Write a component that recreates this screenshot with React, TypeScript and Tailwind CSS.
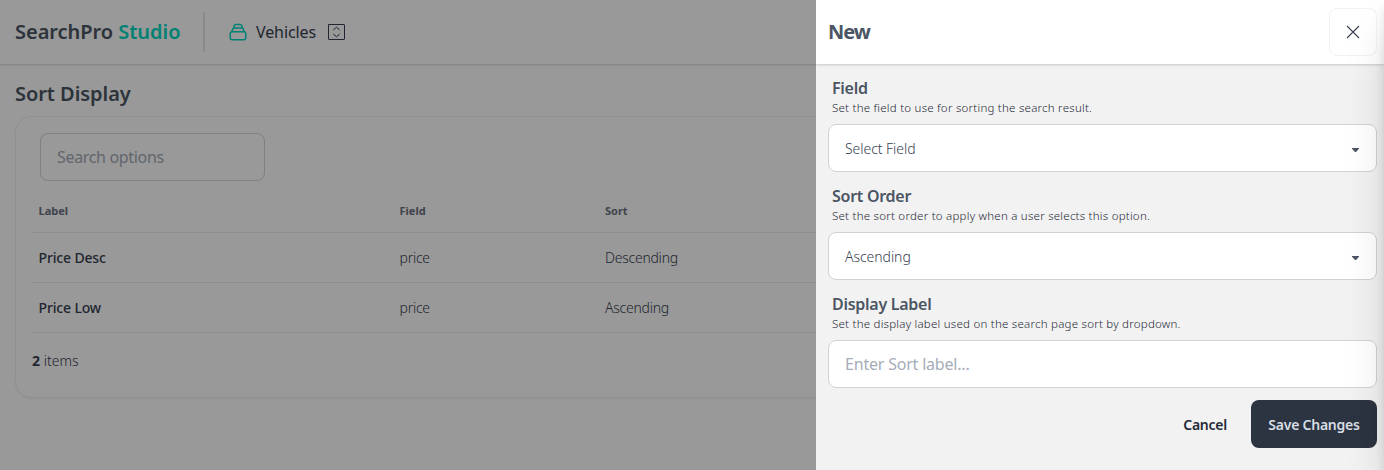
const rows = [
  { label: "Price Desc", field: "price", sort: "Descending" },
  { label: "Price Low", field: "price", sort: "Ascending" },
];

function StackIcon() {
  return (
    <svg className="ml-6 size-[18px] text-[#00d7c0]" viewBox="0 0 18 18" fill="none" stroke="currentColor" strokeWidth="1.5" strokeLinejoin="round">
      <rect x="1.25" y="8.75" width="15.5" height="8" rx="2" />
      <path d="M2.8 8.9 3.6 6.2Q4 5 5.2 5h7.6Q14 5 14.4 6.2l.8 2.7" />
      <path d="M4.7 5 5.2 2.6Q5.5 1.5 6.6 1.5h4.8q1.1 0 1.4 1.1L13.3 5" />
    </svg>
  );
}

function UpDownIcon() {
  return (
    <svg className="h-4 w-[17px] text-[#374151]" viewBox="0 0 17 16" fill="none" stroke="currentColor" strokeLinecap="round" strokeLinejoin="round">
      <rect x="0.5" y="0.5" width="16" height="15" rx="0.5" />
      <path d="M5.6 5.7 8.5 3.3l2.9 2.4M5.6 10.3l2.9 2.4 2.9-2.4" />
    </svg>
  );
}

function Caret() {
  return (
    <svg className="mt-0.5 mr-[13px] h-1 w-[7px] fill-[#4b5563]" viewBox="0 0 7 4">
      <path d="M0 0h7v.8L4 4H3L0 .8z" />
    </svg>
  );
}

function FieldHeading({ title, hint }: { title: string; hint: string }) {
  return (
    <div className="mb-2 px-1">
      <h3 className="text-base leading-6 font-semibold tracking-[-0.27px] text-[#4b5563]">{title}</h3>
      <p className="text-[11.5px] leading-4 font-light tracking-[0.24px] text-[#1f2937]">{hint}</p>
    </div>
  );
}

function SelectField({ title, hint, value }: { title: string; hint: string; value: string }) {
  return (
    <div>
      <FieldHeading title={title} hint={hint} />
      <button className="flex h-12 w-full items-center justify-between rounded-lg border border-[#d0d2d5] bg-white px-4 pt-px pr-1 text-sm font-light tracking-[-0.05px] text-[#374151]">
        {value}
        <Caret />
      </button>
    </div>
  );
}

function Page() {
  return (
    <div className="h-full w-full bg-white text-[#374151]">
      <header className="flex h-16 items-center bg-white pl-[15px] shadow-[0_1px_3px_rgba(0,0,0,0.1),0_1px_2px_rgba(0,0,0,0.08)]">
        <h1 className="w-[188px] text-xl font-semibold tracking-[-0.03px] text-[#4b5563]">
          SearchPro <span className="text-[#00d7c0]">Studio</span>
        </h1>
        <div className="h-10 w-0.5 bg-[#e5e6e6]" />
        <StackIcon />
        <span className="ml-[9px] w-[72px] text-base tracking-[-0.1px]">Vehicles</span>
        <UpDownIcon />
      </header>
      <main className="pt-4 pl-[15px]">
        <h2 className="mb-2 text-xl font-semibold tracking-[-0.05px] text-[#4b5563]">Sort Display</h2>
        <section className="mr-4 h-[282px] rounded-2xl border border-[#f0f0f0] p-4 shadow-[0_1px_2px_rgba(0,0,0,0.05)]">
          <input
            className="ml-2 block h-12 w-[225px] rounded-lg border border-[#d5d6d9] px-4 tracking-[-0.33px] placeholder:text-[#a3aab6]"
            placeholder="Search options"
          />
          <div className="mt-2 grid h-11 grid-cols-[361px_205.5px_1fr] items-center border-b border-[#ececec] px-[6.5px] pt-0.5 text-[11px] font-bold text-[#6b7280]">
            <span>Label</span>
            <span>Field</span>
            <span>Sort</span>
          </div>
          {rows.map((row) => (
            <div key={row.label} className="grid h-[50px] grid-cols-[361px_205.5px_1fr] items-center border-b border-[#ececec] px-[6.5px] pt-px text-sm font-light tracking-[-0.25px]">
              <span className="font-medium tracking-[-0.15px]">{row.label}</span>
              <span>{row.field}</span>
              <span>{row.sort}</span>
            </div>
          ))}
          <p className="mt-[18px] text-sm font-light">
            <b className="font-bold">2</b> items
          </p>
        </section>
      </main>
    </div>
  );
}

function Drawer() {
  return (
    <aside className="absolute inset-y-0 right-0 w-[568px] overflow-hidden bg-[#f2f2f2]">
      <header className="flex h-16 items-center justify-between bg-white pr-[7px] pl-3 shadow-[0_1px_3px_rgba(0,0,0,0.1),0_1px_2px_rgba(0,0,0,0.08)]">
        <h2 className="text-xl font-bold tracking-[-1px] text-[#4b5563]">New</h2>
        <button className="grid size-12 place-items-center rounded-lg border border-[#f2f2f2]">
          <svg className="size-3.5 text-[#374151]" viewBox="0 0 14 14" fill="none" stroke="currentColor" strokeWidth="1.1">
            <path d="m1 1 12 12M13 1 1 13" />
          </svg>
        </button>
      </header>
      <form className="flex flex-col gap-3 pt-3 pr-[7px] pl-3">
        <SelectField title="Field" hint="Set the field to use for sorting the search result." value="Select Field" />
        <SelectField title="Sort Order" hint="Set the sort order to apply when a user selects this option." value="Ascending" />
        <div>
          <FieldHeading title="Display Label" hint="Set the display label used on the search page sort by dropdown." />
          <input
            className="block h-12 w-full rounded-lg border border-[#d0d2d5] bg-white px-4 tracking-[-0.2px] placeholder:text-[#a5acb8]"
            placeholder="Enter Sort label..."
          />
        </div>
        <div className="flex justify-end gap-2 text-sm font-semibold tracking-[-0.24px]">
          <button type="button" className="h-12 px-4 pt-px text-[#1f2937]">Cancel</button>
          <button type="button" className="h-12 w-[126px] rounded-lg bg-[#2b3440] pt-px text-[#d7dde4]">Save Changes</button>
        </div>
      </form>
      <div className="absolute inset-y-0 left-full w-40 shadow-[0_25px_50px_-12px_rgba(0,0,0,0.22),0_8px_10px_rgba(0,0,0,0.1)]" />
    </aside>
  );
}

export default function App() {
  return (
    <div className="relative h-[470px] w-full overflow-hidden font-['Noto_Sans',sans-serif]">
      <Page />
      <div className="absolute inset-0 bg-black/40" />
      <Drawer />
    </div>
  );
}
